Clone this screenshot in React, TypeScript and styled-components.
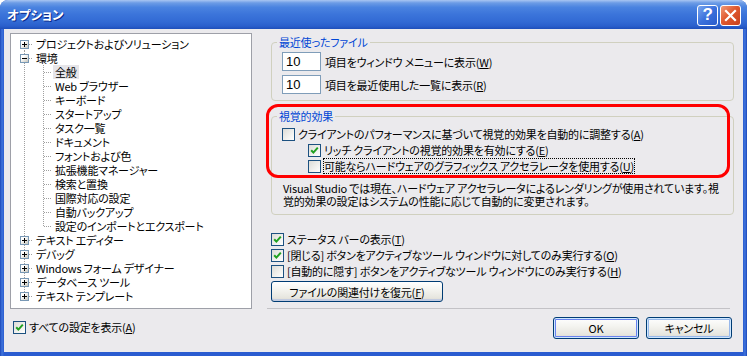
import styled, { createGlobalStyle } from "styled-components";

const GlobalStyle = createGlobalStyle`
  html, body {
    margin: 0;
    padding: 0;
    background: #ffffff;
  }
  body {
    font-family: "Noto Sans CJK JP", "Noto Sans", sans-serif;
    font-size: 11px;
    letter-spacing: -0.2px;
    color: #000;
    font-feature-settings: "palt";
  }
`;

type TreeItem = {
  label: string;
  level: 0 | 1;
  expander?: "+" | "-";
  selected?: boolean;
};

const treeItems: TreeItem[] = [
  { label: "プロジェクトおよびソリューション", level: 0, expander: "+" },
  { label: "環境", level: 0, expander: "-" },
  { label: "全般", level: 1, selected: true },
  { label: "Web ブラウザー", level: 1 },
  { label: "キーボード", level: 1 },
  { label: "スタートアップ", level: 1 },
  { label: "タスク一覧", level: 1 },
  { label: "ドキュメント", level: 1 },
  { label: "フォントおよび色", level: 1 },
  { label: "拡張機能マネージャー", level: 1 },
  { label: "検索と置換", level: 1 },
  { label: "国際対応の設定", level: 1 },
  { label: "自動バックアップ", level: 1 },
  { label: "設定のインポートとエクスポート", level: 1 },
  { label: "テキスト エディター", level: 0, expander: "+" },
  { label: "デバッグ", level: 0, expander: "+" },
  { label: "Windows フォーム デザイナー", level: 0, expander: "+" },
  { label: "データベース ツール", level: 0, expander: "+" },
  { label: "テキスト テンプレート", level: 0, expander: "+" },
];

export default function App() {
  return (
    <>
      <GlobalStyle />
      <Window>
        <TitleBar>
          <Title>オプション</Title>
          <CaptionButtons>
            <HelpButton>?</HelpButton>
            <CloseButton>
              <svg width="13" height="13" viewBox="0 0 13 13">
                <path d="M2 2 L11 11 M11 2 L2 11" stroke="#fff" strokeWidth="2.2" strokeLinecap="square" />
              </svg>
            </CloseButton>
          </CaptionButtons>
        </TitleBar>
        <Body>
          <MainRow>
            <Tree>
              {treeItems.map((item, i) => {
                const lastRoot = i === treeItems.length - 1;
                const firstRoot = i === 0;
                const next = treeItems[i + 1];
                const lastChild = item.level === 1 && (!next || next.level === 0);
                return (
                  <TreeRow key={item.label}>
                    <RootGuide $line={firstRoot ? "bottom" : lastRoot ? "top" : "full"} $tick={item.level === 0}>
                      {item.expander && <Expander $plus={item.expander === "+"} />}
                    </RootGuide>
                    {item.level === 1 && <ChildGuide $line={lastChild ? "top" : "full"} $tick />}
                    <TreeLabel $selected={item.selected}>{item.label}</TreeLabel>
                  </TreeRow>
                );
              })}
            </Tree>
            <RightColumn>
              <GroupBox>
                <GroupLegend>最近使ったファイル</GroupLegend>
                <FieldRow>
                  <TextBox>10</TextBox>
                  <span>
                    項目をウィンドウ メニューに表示(<u>W</u>)
                  </span>
                </FieldRow>
                <FieldRow>
                  <TextBox>10</TextBox>
                  <span>
                    項目を最近使用した一覧に表示(<u>R</u>)
                  </span>
                </FieldRow>
              </GroupBox>
              <GroupBox $gap={8}>
                <GroupLegend>視覚的効果</GroupLegend>
                <Check label={<>クライアントのパフォーマンスに基づいて視覚的効果を自動的に調整する(<u>A</u>)</>} />
                <Check indent label={<>リッチ クライアントの視覚的効果を有効にする(<u>E</u>)</>} checked />
                <Check indent focused label={<>可能ならハードウェアのグラフィックス アクセラレータを使用する(<u>U</u>)</>} />
                <Note>
                  Visual Studio では現在、ハードウェア アクセラレータによるレンダリングが使用されています。視覚的効果の設定はシステムの性能に応じて自動的に変更されます。
                </Note>
              </GroupBox>
              <Highlight />
              <CheckList>
                <Check checked label={<>ステータス バーの表示(<u>T</u>)</>} />
                <Check checked label={<>[閉じる] ボタンをアクティブなツール ウィンドウに対してのみ実行する(<u>O</u>)</>} />
                <Check label={<>[自動的に隠す] ボタンをアクティブなツール ウィンドウにのみ実行する(<u>H</u>)</>} />
              </CheckList>
              <PushButton $width={172} $variant="plain">
                ファイルの関連付けを復元(<u>F</u>)
              </PushButton>
              <Separator />
            </RightColumn>
          </MainRow>
          <Footer>
            <FooterCheck>
              <Check checked label={<>すべての設定を表示(<u>A</u>)</>} />
            </FooterCheck>
            <FooterButtons>
              <PushButton $width={86} $variant="default">OK</PushButton>
              <PushButton $width={86} $variant="focus">キャンセル</PushButton>
            </FooterButtons>
          </Footer>
        </Body>
      </Window>
    </>
  );
}

function Check({
  label,
  checked,
  indent,
  focused,
}: {
  label: React.ReactNode;
  checked?: boolean;
  indent?: boolean;
  focused?: boolean;
}) {
  return (
    <CheckRow $indent={indent}>
      <CheckBox>
        {checked && (
          <svg width="9" height="9" viewBox="0 0 9 9">
            <polyline points="1.2,4.2 3.4,6.6 7.8,1.6" fill="none" stroke="#21A121" strokeWidth="2" />
          </svg>
        )}
      </CheckBox>
      <CheckLabel $focused={focused}>{label}</CheckLabel>
    </CheckRow>
  );
}

const Window = styled.div`
  width: 747px;
  height: 356px;
  box-sizing: border-box;
  display: flex;
  flex-direction: column;
  background: linear-gradient(to right, #1c47b8 0, #3f74dc 2px, #2a5cd0 4px, #2a5cd0 743px, #3f74dc 745px, #1c47b8 747px);
  border-radius: 8px 8px 0 0;
  overflow: hidden;
`;

const TitleBar = styled.div`
  flex: none;
  height: 29px;
  display: flex;
  align-items: center;
  justify-content: space-between;
  padding: 0 6px 0 7px;
  background: linear-gradient(
    to bottom,
    #a9c6f2 0%,
    #6c9ce6 10%,
    #4a83e0 25%,
    #3b74da 50%,
    #326ad4 75%,
    #2a5fcc 90%,
    #1e4fb9 100%
  );
`;

const Title = styled.span`
  color: #fff;
  font-weight: bold;
  font-size: 12.5px;
  letter-spacing: 0;
  text-shadow: 1px 1px 0 #0b2a8a;
`;

const CaptionButtons = styled.div`
  display: flex;
  gap: 2px;
  padding-top: 1px;
`;

const CaptionBase = styled.span`
  width: 21px;
  height: 21px;
  box-sizing: border-box;
  border: 1px solid #fff;
  border-radius: 3px;
  display: flex;
  align-items: center;
  justify-content: center;
  color: #fff;
`;

const HelpButton = styled(CaptionBase)`
  background: linear-gradient(135deg, #7aa6ee 0%, #3b71dc 50%, #2a5ccc 100%);
  font-family: "Liberation Sans", sans-serif;
  font-weight: bold;
  font-size: 17px;
`;

const CloseButton = styled(CaptionBase)`
  background: linear-gradient(135deg, #f09a78 0%, #e0592f 45%, #c8401c 100%);
`;

const Body = styled.div`
  flex: 1;
  margin: 0 4px 4px;
  background: #ebeaed;
  display: flex;
  flex-direction: column;
`;

const MainRow = styled.div`
  display: flex;
  gap: 19px;
  padding: 4px 9px 0 6px;
  height: 276px;
`;

const Tree = styled.div`
  flex: none;
  width: 242px;
  height: 276px;
  box-sizing: border-box;
  border: 1px solid #9ea0a8;
  background: #fff;
  padding-top: 3px;
`;

const TreeRow = styled.div`
  display: flex;
  height: 14px;
  align-items: center;
  white-space: nowrap;
`;

type LineKind = "full" | "top" | "bottom";

const dots = "repeating-linear-gradient(to bottom, #a0a0a0 0 1px, transparent 1px 2px)";
const hdots = "repeating-linear-gradient(to right, #a0a0a0 0 1px, transparent 1px 2px)";

const Guide = styled.span<{ $line: LineKind; $tick?: boolean }>`
  position: relative;
  flex: none;
  height: 14px;
  &::before {
    content: "";
    position: absolute;
    width: 1px;
    top: ${(p) => (p.$line === "bottom" ? "7px" : "0")};
    bottom: ${(p) => (p.$line === "top" ? "7px" : "0")};
    background: ${dots};
  }
  &::after {
    content: "";
    display: ${(p) => (p.$tick ? "block" : "none")};
    position: absolute;
    top: 7px;
    height: 1px;
    background: ${hdots};
  }
`;

const RootGuide = styled(Guide)`
  width: 23px;
  &::before {
    left: 13px;
  }
  &::after {
    left: 14px;
    width: 8px;
  }
`;

const ChildGuide = styled(Guide)`
  width: 19px;
  &::before {
    left: 9px;
  }
  &::after {
    left: 10px;
    width: 8px;
  }
`;

const Expander = styled.span<{ $plus: boolean }>`
  position: absolute;
  z-index: 1;
  left: 9px;
  top: 3px;
  width: 9px;
  height: 9px;
  box-sizing: border-box;
  border: 1px solid #7898b5;
  background: linear-gradient(135deg, #ffffff 30%, #c6c5bb 100%);
  &::before {
    content: "";
    position: absolute;
    left: 1px;
    top: 3px;
    width: 5px;
    height: 1px;
    background: #000;
  }
  &::after {
    content: "";
    display: ${(p) => (p.$plus ? "block" : "none")};
    position: absolute;
    left: 3px;
    top: 1px;
    width: 1px;
    height: 5px;
    background: #000;
  }
`;

const TreeLabel = styled.span<{ $selected?: boolean }>`
  display: block;
  padding: 0 2px;
  line-height: 14px;
  height: 14px;
  overflow: hidden;
  background: ${(p) => (p.$selected ? "#e6e5e9" : "transparent")};
`;

const RightColumn = styled.div`
  position: relative;
  flex: none;
  width: 463px;
  display: flex;
  flex-direction: column;
  align-items: flex-start;
`;

const GroupBox = styled.fieldset<{ $gap?: number }>`
  align-self: stretch;
  margin: ${(p) => p.$gap ?? 2}px 0 0;
  padding: 3px 10px 6px;
  border: 1px solid #d0d0bf;
  border-radius: 4px;
  min-inline-size: 0;
  display: flex;
  flex-direction: column;
`;

const GroupLegend = styled.legend`
  color: #0046d5;
  padding: 0 2px;
  margin-left: -5px;
  line-height: 14px;
  height: 14px;
`;

const FieldRow = styled.div`
  display: flex;
  align-items: center;
  gap: 4px;
  height: 19px;
  & + & {
    margin-top: 4px;
  }
`;

const TextBox = styled.span`
  width: 39px;
  height: 19px;
  box-sizing: border-box;
  border: 1px solid #7f9db9;
  background: #fff;
  padding-left: 3px;
  line-height: 17px;
  font-family: "Liberation Sans", sans-serif;
  font-size: 13px;
  letter-spacing: 0;
`;

const CheckRow = styled.div<{ $indent?: boolean }>`
  display: flex;
  align-items: center;
  gap: 3px;
  height: 16px;
  padding-left: ${(p) => (p.$indent ? 26 : 0)}px;
  white-space: nowrap;
`;

const CheckBox = styled.span`
  flex: none;
  width: 13px;
  height: 13px;
  box-sizing: border-box;
  border: 1px solid #1c5180;
  background: linear-gradient(135deg, #dcdcd7 0%, #f2f2ef 60%, #ffffff 100%);
  display: flex;
  align-items: center;
  justify-content: center;
`;

const CheckLabel = styled.span<{ $focused?: boolean }>`
  line-height: 14px;
  outline: ${(p) => (p.$focused ? "1px dotted #000" : "none")};
`;

const Note = styled.p`
  margin: 8px 0 0 1px;
  line-height: 13px;
`;

const Highlight = styled.div`
  position: absolute;
  left: -5px;
  top: 71px;
  width: 464px;
  height: 74px;
  box-sizing: border-box;
  border: 3px solid #ff0000;
  border-radius: 12px;
  pointer-events: none;
`;

const CheckList = styled.div`
  margin-top: 16px;
  display: flex;
  flex-direction: column;
`;

const PushButton = styled.span<{ $width: number; $variant: "plain" | "default" | "focus" }>`
  width: ${(p) => p.$width}px;
  height: 21px;
  box-sizing: border-box;
  margin-top: 2px;
  display: flex;
  align-items: center;
  justify-content: center;
  border: 1px solid #003c74;
  border-radius: 3px;
  white-space: nowrap;
  background: linear-gradient(to bottom, #ffffff 0%, #f4f4f0 40%, #e6e5de 85%, #d6d0c5 100%);
  box-shadow: ${(p) =>
    p.$variant === "default"
      ? "inset 0 0 0 1px #cee7ff, inset 0 0 0 2px #6982ee"
      : p.$variant === "focus"
        ? "inset 0 0 0 1px #cee7ff, inset 0 0 0 2px #98b8ea"
        : "inset 0 -2px 0 #c2cbe0"};
`;

const Separator = styled.div`
  margin-top: auto;
  margin-left: -4px;
  width: 463px;
  height: 1px;
  background: #c3c2c6;
`;

const Footer = styled.div`
  flex: 1;
  display: flex;
  justify-content: space-between;
  padding: 8px 11px 0 9px;
`;

const FooterCheck = styled.div`
  padding-top: 2px;
`;

const FooterButtons = styled.div`
  display: flex;
  gap: 7px;
  height: 22px;
  & > span {
    margin-top: 0;
    height: 22px;
  }
`;
